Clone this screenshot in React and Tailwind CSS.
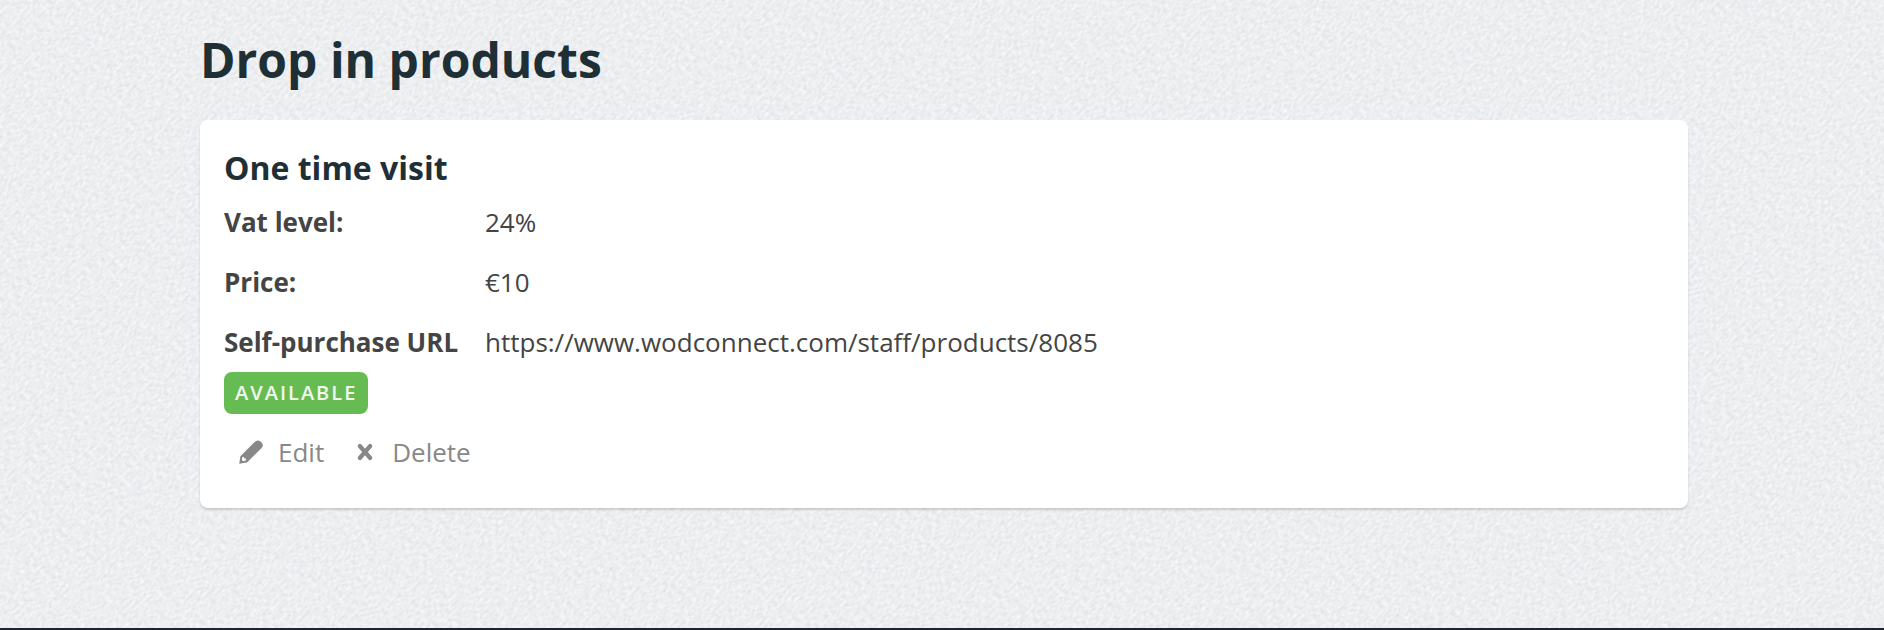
const product = {
  name: 'One time visit',
  status: 'Available',
  editHref: '/staff/products/8085/edit',
  details: [
    { label: 'Vat level:', value: '24%' },
    { label: 'Price:', value: '€10' },
    { label: 'Self-purchase URL', value: 'https://www.wodconnect.com/staff/products/8085' },
  ],
};

function PencilIcon() {
  return (
    <svg viewBox="0 0 24 24" className="w-6 h-6" fill="currentColor" aria-hidden="true">
      <path
        fillRule="evenodd"
        d="M0.2 23.8 L1.4 16.3 L15.6 2 Q18.2 -0.7 21.2 1.2 L22.8 2.8 Q25 5.4 22.4 8.2 L8 22.4 Z M3.4 17.2 L2.8 20 L4.2 21.3 L6.9 20.6 L6.9 18.5 L5.1 18.3 L4.9 16.8 Z"
      />
    </svg>
  );
}

function CrossIcon() {
  return (
    <svg viewBox="0 0 24 24" className="w-6 h-6" fill="none" stroke="currentColor" strokeWidth="4.2" strokeLinecap="round" aria-hidden="true">
      <path d="M6.8 6 L17.2 18 M17.2 6 L6.8 18" />
    </svg>
  );
}

// Paper grain behind the whole page, turned so that its threads run diagonally
function PageTexture() {
  return (
    <svg className="absolute inset-0 w-full h-full pointer-events-none" aria-hidden="true">
      <filter id="grain" x="0" y="0" width="100%" height="100%" colorInterpolationFilters="sRGB">
        <feTurbulence type="fractalNoise" baseFrequency="0.36 0.22" numOctaves="2" seed="4" />
        <feColorMatrix values="0.13 0 0 0 0.86  0.13 0 0 0 0.868  0.12 0 0 0 0.882  0 0 0 0 1" />
      </filter>
      <g transform="rotate(45)">
        <rect x="-10%" y="-300%" width="120%" height="600%" filter="url(#grain)" />
      </g>
    </svg>
  );
}

function ProductCard({ product }) {
  return (
    <section className="bg-white rounded-lg px-6 pt-6 pb-[34px] shadow-[0_2px_2px_rgba(0,0,0,0.15)]">
      <h2 className="text-[32px] leading-[48px] font-bold text-[#1f2f36]">{product.name}</h2>

      <dl>
        {product.details.map((row) => (
          <div key={row.label} className="flex text-[26px] leading-[60px]">
            <dt className="w-[261px] shrink-0 font-bold">{row.label}</dt>
            <dd className="min-w-0 break-words">{row.value}</dd>
          </div>
        ))}
      </dl>

      <div className="flex">
        <span className="rounded-lg bg-[#67bb53] px-[11px] text-[20px] leading-[42px] font-semibold tracking-[2px] uppercase text-white/90">
          {product.status}
        </span>
      </div>

      <div className="flex gap-[29px] mt-4 pl-[15px] text-[26px] leading-[44px] text-[#888888]">
        <a href={product.editHref} className="flex items-center gap-[15px] hover:text-[#444444]">
          <PencilIcon />
          Edit
        </a>
        <button type="button" className="flex items-center gap-[15px] cursor-pointer hover:text-[#444444]">
          <CrossIcon />
          Delete
        </button>
      </div>
    </section>
  );
}

export default function App() {
  return (
    <div className="relative flex flex-col min-h-screen overflow-hidden bg-[#ebedef] font-['Open_Sans','Noto_Sans',sans-serif] text-[#444444]">
      <PageTexture />
      <main className="relative flex-1 pl-50 pr-49 pt-7 pb-20">
        <h1 className="mb-7 text-[48px] leading-[64px] font-bold text-[#1f2f36]">Drop in products</h1>
        <ProductCard product={product} />
      </main>
      <footer className="relative h-0.5 bg-[#1d252f]" />
    </div>
  );
}
